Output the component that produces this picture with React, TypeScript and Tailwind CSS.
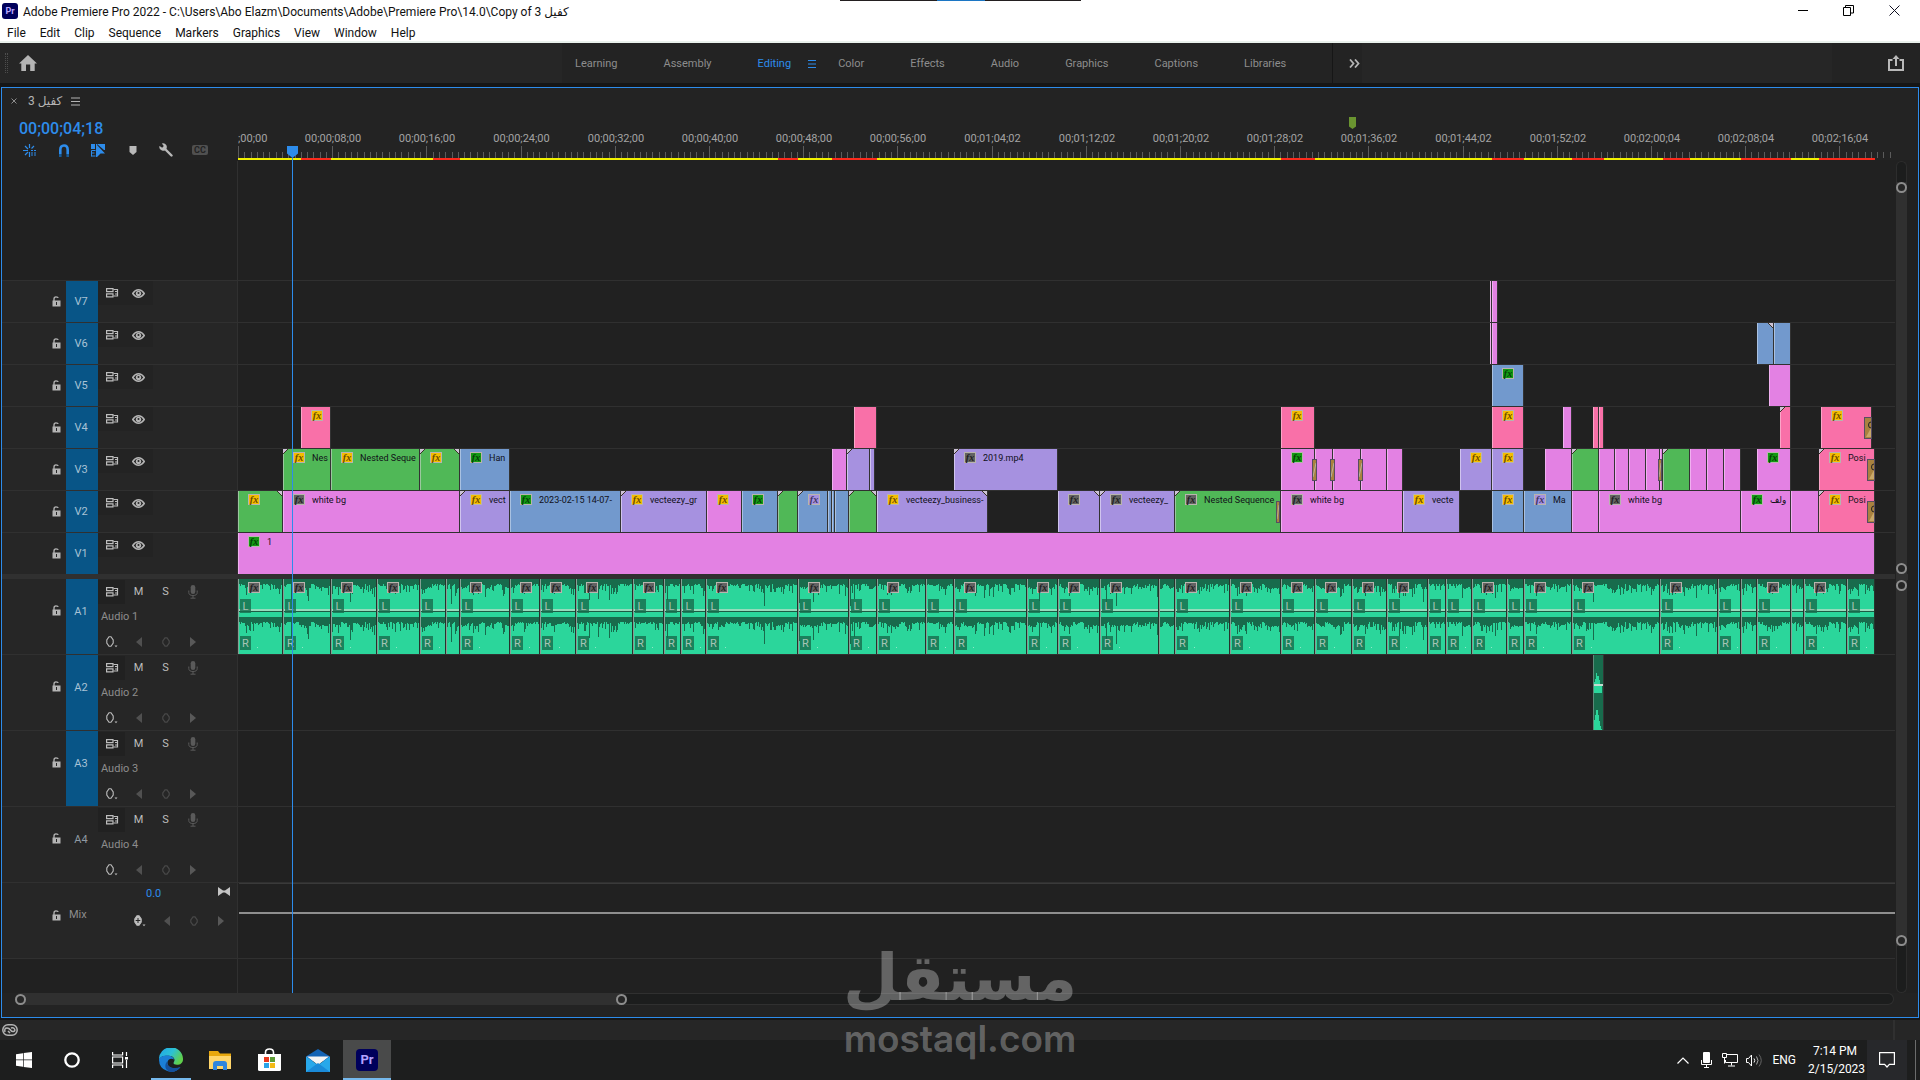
import type { ReactNode } from "react";

type Tone = "pink" | "lavender" | "blue" | "green" | "salmon";
type Fx = "yellow" | "green" | "gray" | "purple";

type Clip = {
  start: number;
  end: number;
  tone: Tone;
  fx?: Fx;
  label?: string;
  fadeIn?: boolean;
  fadeOut?: boolean;
  transition?: "cut" | "end" | "wide";
};

const toneStyles: Record<Tone, string> = {
  pink: "bg-[#e381e3] border-l-[#f0b0f0]",
  lavender: "bg-[#a691e0] border-l-[#d0c4ee]",
  blue: "bg-[#7299cd] border-l-[#a9c1e1]",
  green: "bg-[#50b857] border-l-[#9bc79e]",
  salmon: "bg-[#f970a8] border-l-[#fba5c8]",
};

const fxStyles: Record<Fx, string> = {
  yellow: "bg-[#f5bd00] text-[#6b4a00]",
  green: "bg-[#139a13] text-[#053f05]",
  gray: "bg-[#636363] text-[#1f1f1f]",
  purple: "bg-[#a691e0] text-[#3d3560]",
};

// clip positions are pixels from the start of the sequence
const videoTracks: { name: string; clips: Clip[] }[] = [
  {
    name: "V7",
    clips: [
      { start: 1252, end: 1254, tone: "pink" },
      { start: 1254, end: 1260, tone: "pink" },
    ],
  },
  {
    name: "V6",
    clips: [
      { start: 1252, end: 1254, tone: "pink" },
      { start: 1254, end: 1260, tone: "pink" },
      { start: 1519, end: 1536, tone: "blue", fadeOut: true },
      { start: 1536, end: 1553, tone: "blue" },
    ],
  },
  {
    name: "V5",
    clips: [
      { start: 1254, end: 1286, tone: "blue", fx: "green" },
      { start: 1531, end: 1553, tone: "pink" },
    ],
  },
  {
    name: "V4",
    clips: [
      { start: 63, end: 93, tone: "salmon", fx: "yellow" },
      { start: 616, end: 639, tone: "salmon" },
      { start: 1043, end: 1077, tone: "salmon", fx: "yellow" },
      { start: 1254, end: 1286, tone: "salmon", fx: "yellow" },
      { start: 1325, end: 1334, tone: "pink" },
      { start: 1355, end: 1361, tone: "salmon" },
      { start: 1361, end: 1366, tone: "salmon" },
      { start: 1542, end: 1553, tone: "salmon", fadeIn: true },
      { start: 1583, end: 1634, tone: "salmon", fx: "yellow", transition: "wide" },
    ],
  },
  {
    name: "V3",
    clips: [
      { start: 45, end: 93, tone: "green", fx: "yellow", label: "Nes", fadeIn: true },
      { start: 93, end: 182, tone: "green", fx: "yellow", label: "Nested Seque" },
      { start: 182, end: 222, tone: "green", fx: "yellow", fadeIn: true, fadeOut: true },
      { start: 222, end: 272, tone: "blue", fx: "green", label: "Han" },
      { start: 594, end: 609, tone: "pink" },
      { start: 609, end: 632, tone: "lavender", fadeIn: true },
      { start: 632, end: 637, tone: "lavender" },
      { start: 716, end: 820, tone: "lavender", fx: "gray", label: "2019.mp4", fadeIn: true },
      { start: 1043, end: 1077, tone: "pink", fx: "green", transition: "cut" },
      { start: 1077, end: 1095, tone: "pink", transition: "cut" },
      { start: 1095, end: 1123, tone: "pink", transition: "cut" },
      { start: 1123, end: 1149, tone: "pink" },
      { start: 1149, end: 1165, tone: "pink" },
      { start: 1222, end: 1254, tone: "lavender", fx: "yellow" },
      { start: 1254, end: 1286, tone: "lavender", fx: "yellow" },
      { start: 1307, end: 1334, tone: "pink" },
      { start: 1334, end: 1361, tone: "green", fadeIn: true },
      { start: 1361, end: 1377, tone: "pink" },
      { start: 1377, end: 1391, tone: "pink" },
      { start: 1391, end: 1408, tone: "pink" },
      { start: 1408, end: 1422, tone: "pink" },
      { start: 1422, end: 1425, tone: "pink", transition: "end" },
      { start: 1425, end: 1452, tone: "green", fadeIn: true },
      { start: 1452, end: 1469, tone: "pink" },
      { start: 1469, end: 1486, tone: "pink" },
      { start: 1486, end: 1503, tone: "pink" },
      { start: 1519, end: 1553, tone: "pink", fx: "green" },
      { start: 1581, end: 1637, tone: "salmon", fx: "yellow", label: "Posi", fadeIn: true, transition: "wide" },
    ],
  },
  {
    name: "V2",
    clips: [
      { start: 0, end: 45, tone: "green", fx: "yellow", fadeOut: true },
      { start: 45, end: 222, tone: "pink", fx: "gray", label: "white bg" },
      { start: 222, end: 272, tone: "lavender", fx: "yellow", label: "vect", fadeIn: true },
      { start: 272, end: 383, tone: "blue", fx: "green", label: "2023-02-15 14-07-" },
      { start: 383, end: 469, tone: "lavender", fx: "yellow", label: "vecteezy_gr", fadeIn: true },
      { start: 469, end: 504, tone: "pink", fx: "yellow" },
      { start: 504, end: 540, tone: "blue", fx: "green" },
      { start: 540, end: 560, tone: "green", fadeIn: true },
      { start: 560, end: 590, tone: "blue", fx: "purple", fadeIn: true },
      { start: 590, end: 594, tone: "blue" },
      { start: 594, end: 597, tone: "blue" },
      { start: 597, end: 611, tone: "blue" },
      { start: 611, end: 639, tone: "green", fadeIn: true, fadeOut: true },
      { start: 639, end: 750, tone: "lavender", fx: "yellow", label: "vecteezy_business-", fadeOut: true },
      { start: 820, end: 862, tone: "lavender", fx: "gray", fadeOut: true },
      { start: 862, end: 937, tone: "lavender", fx: "gray", label: "vecteezy_", fadeIn: true },
      { start: 937, end: 1043, tone: "green", fx: "gray", label: "Nested Sequence", fadeIn: true, transition: "end" },
      { start: 1043, end: 1165, tone: "pink", fx: "gray", label: "white bg" },
      { start: 1165, end: 1222, tone: "lavender", fx: "yellow", label: "vecte" },
      { start: 1254, end: 1286, tone: "blue", fx: "yellow" },
      { start: 1286, end: 1334, tone: "blue", fx: "purple", label: "Ma" },
      { start: 1334, end: 1361, tone: "pink" },
      { start: 1361, end: 1503, tone: "pink", fx: "gray", label: "white bg" },
      { start: 1503, end: 1553, tone: "pink", fx: "green", label: "ولف" },
      { start: 1553, end: 1581, tone: "pink" },
      { start: 1581, end: 1637, tone: "salmon", fx: "yellow", label: "Posi", fadeIn: true, transition: "wide" },
    ],
  },
  {
    name: "V1",
    clips: [{ start: 0, end: 1637, tone: "pink", fx: "green", label: "1" }],
  },
];

const audioCuts = [
  0, 45, 93, 139, 182, 208, 222, 272, 302, 338, 395, 426, 443, 468, 560, 611, 639, 688, 716, 789, 820, 862, 921,
  937, 992, 1043, 1077, 1114, 1149, 1190, 1208, 1234, 1269, 1286, 1334, 1422, 1480, 1503, 1519, 1553, 1566, 1609,
  1637,
];

const audioTracks = ["Audio 1", "Audio 2", "Audio 3", "Audio 4"];

const timecodes = [
  ";00;00", "00;00;08;00", "00;00;16;00", "00;00;24;00", "00;00;32;00", "00;00;40;00", "00;00;48;00",
  "00;00;56;00", "00;01;04;02", "00;01;12;02", "00;01;20;02", "00;01;28;02", "00;01;36;02", "00;01;44;02",
  "00;01;52;02", "00;02;00;04", "00;02;08;04", "00;02;16;04",
];

// yellow / red alternate, starting with yellow
const renderBar = [
  63, 93, 195, 222, 540, 560, 594, 639, 1043, 1077, 1254, 1286, 1334, 1366, 1425, 1452, 1503, 1553, 1581, 1637,
];

const tick = (i: number) => Math.round((i * 94.2) / 15);

function FxBadge({ kind, className = "" }: { kind: Fx; className?: string }) {
  return (
    <span
      className={`flex h-[11px] w-3 shrink-0 items-center justify-center border border-[#b9b4ae] font-[Liberation_Serif,serif] text-[10px] leading-none font-bold italic ${fxStyles[kind]} ${className}`}
    >
      fx
    </span>
  );
}

function FadeCorner({ side }: { side: "left" | "right" }) {
  return (
    <svg
      width="5"
      height="5"
      viewBox="0 0 5 5"
      className={side === "left" ? "absolute top-0 -left-px" : "absolute top-0 right-0 -scale-x-100"}
    >
      <path d="M0 0h5L0 5z" fill="#cdc3d6" />
      <path d="M5 0L0 5" stroke="#3a3226" strokeWidth="1" />
    </svg>
  );
}

const transitionStyles = {
  cut: "w-[5px] -right-[3px]",
  end: "w-1 right-0",
  wide: "w-2 -right-px",
};

function Transition({ kind }: { kind: "cut" | "end" | "wide" }) {
  return (
    <span
      className={`absolute top-[10px] z-10 h-[22px] border border-[#574d63] bg-[#a9823f] ${transitionStyles[kind]}`}
    >
      {kind === "wide" ? (
        <svg viewBox="0 0 6 20" className="block h-full w-full">
          <path d="M6 4Q3.500 4 3.500 7T6 10" fill="none" stroke="#222" strokeWidth="1" />
          <path d="M1 19L6 10v9z" fill="#c9a86a" />
        </svg>
      ) : (
        <svg viewBox="0 0 3 20" preserveAspectRatio="none" className="block h-full w-full">
          <path d="M3 3L0 17" stroke="#b9b09f" strokeWidth="1" />
        </svg>
      )}
    </span>
  );
}

function VideoClips({ clips }: { clips: Clip[] }) {
  return (
    <div className="flex h-[41px]">
      {clips.map((clip, i) => (
        <div
          key={clip.start}
          className={`relative h-full shrink-0 border-r border-l border-r-[#333] ${toneStyles[clip.tone]}`}
          style={{
            width: clip.end - clip.start,
            marginLeft: clip.start - (i > 0 ? clips[i - 1].end : 0),
          }}
        >
          {clip.fadeIn && <FadeCorner side="left" />}
          {clip.fadeOut && <FadeCorner side="right" />}
          {clip.fx && (
            <div className="flex h-[17px] items-end gap-[7px] overflow-hidden pl-[9px]">
              <FxBadge kind={clip.fx} className="mb-[3px]" />
              {clip.label && (
                <span className="text-[9px] leading-[16px] whitespace-nowrap text-[#101018]">{clip.label}</span>
              )}
            </div>
          )}
          {clip.transition && <Transition kind={clip.transition} />}
        </div>
      ))}
    </div>
  );
}

// Peak depths hang from the top of a channel; seeded by position so they stay put
function noise(n: number) {
  const v = Math.sin(n * 12.9898) * 43758.5453;
  return v - Math.floor(v);
}

function wavePath(start: number, width: number, height: number) {
  let d = "";
  for (let x = 0; x < width; x++) {
    const n = start + x;
    const drift = noise(Math.floor(n / 6)) > 0.6 ? 3 : 0;
    let depth = 5 + Math.floor(noise(n) * 3) + drift;
    if (noise(n + 0.5) > 0.8) depth += 3 + Math.floor(noise(n + 0.7) * 6);
    if (noise(n + 0.3) > 0.985) depth += 14;
    d += `M${x} ${depth}h1V${height}h-1z`;
  }
  return d;
}

function AudioClip({ start, end }: { start: number; end: number }) {
  const width = end - start;
  const inner = width - 2;
  const channels = [
    { name: "L", height: 38 },
    { name: "R", height: 37 },
  ];
  return (
    <div
      className="relative h-[75px] shrink-0 border-r border-l border-r-[#26332c] border-l-[#86a094] bg-[#186b4c]"
      style={{ width }}
    >
      {channels.map((ch) => (
        <div key={ch.name} className="relative">
          <svg width={inner} height={ch.height} shapeRendering="crispEdges" className="block">
            <path d={wavePath(start, inner, ch.height)} fill="#2bd69b" />
            {width > 20 && <path d={`M18 ${ch.height - 7}h1v1h-1z`} fill="#8fe9c8" />}
          </svg>
          {width >= 17 && (
            <span className="absolute bottom-1 left-px z-10 flex h-[14px] w-[11px] items-center justify-center bg-[#186b4c]/80 text-[11px] leading-none text-[#a9c4b6]">
              {ch.name}
            </span>
          )}
        </div>
      ))}
      {width >= 29 && <FxBadge kind="gray" className="absolute top-[3px] left-[9px]" />}
      <span className="absolute inset-x-0 top-[30px] h-[3px] border-b border-[#1c5a43] bg-[#95dcbc]" />
    </div>
  );
}

function LevelBump() {
  return (
    <div className="relative ml-[1355px] h-[75px] w-[11px] border-r border-l border-r-[#333] border-l-[#5c8a78] bg-[#186b4c]">
      <svg width="9" height="75" viewBox="0 0 9 75" className="block" shapeRendering="crispEdges">
        <path d="M0 38V28L2 23V18h1v3L5 21V25h1v3l2 3v7z" fill="#2bd69b" />
        <path d="M0 75V68L2 58V55h2v3l1 3v3l1 3v3l2 5z" fill="#2bd69b" />
        <path d="M0 29h9v2H0z" fill="#c4dcd0" />
      </svg>
    </div>
  );
}

/* ---- track header icons ---- */

function LockIcon() {
  return (
    <svg width="9" height="11" viewBox="0 0 9 11" fill="none">
      <path d="M2 5V3Q2 .8 4 .8T6.200 1.800" stroke="#b4b4b4" strokeWidth="1.300" />
      <path d="M.5 4.500h8v6h-8z" fill="#b4b4b4" />
      <path d="M4 6h1v3H4z" fill="#262626" />
    </svg>
  );
}

function SyncIcon() {
  return (
    <svg width="13" height="10" viewBox="0 0 13 10" fill="none" stroke="#bdbdbd">
      <path d="M.6 .6h6.400v3H.6zM.6 5.900h6.400v3H.6z" strokeWidth="1.200" />
      <path d="M7.500 1.500h4v6.500h-4" strokeWidth="1.200" />
      <path d="M9 3h2v1H9zM9 5.500h2v1H9z" fill="#bdbdbd" stroke="none" />
    </svg>
  );
}

function EyeIcon() {
  return (
    <svg width="13" height="9" viewBox="0 0 13 9" fill="none">
      <path d="M.7 4.500Q3.300.800 6.500.800T12.300 4.500Q9.700 8.200 6.500 8.200T.7 4.500z" stroke="#b4b4b4" strokeWidth="1.500" />
      <circle cx="6.500" cy="4.500" r="2.700" fill="#b4b4b4" />
      <circle cx="6.500" cy="4" r="1" fill="#262626" />
    </svg>
  );
}

function MicIcon() {
  return (
    <svg width="10" height="14" viewBox="0 0 10 14" fill="none">
      <rect x="2.700" y="0" width="4.600" height="9" rx="2.300" fill="#5a5a5a" />
      <path d="M.8 5.500V7.500Q.8 10.500 5 10.500T9.200 7.500V5.500M5 10.500V13M2.500 13.200h5" stroke="#5a5a5a" />
    </svg>
  );
}

function KeyframeIcon({ filled = false }: { filled?: boolean }) {
  return (
    <svg width="12" height="12" viewBox="0 0 12 12" fill="none">
      <path
        d="M3 .7h2L7.200 4v3L5 10.300H3L.8 7V4z"
        fill={filled ? "#bdbdbd" : "none"}
        stroke="#bdbdbd"
        strokeWidth="1.100"
      />
      {filled && <path d="M4 3v5M1.700 5.500h4.600" stroke="#262626" />}
      <path d="M8.500 9.500h3L10 11.200z" fill="#bdbdbd" />
    </svg>
  );
}

function KeyframeNav() {
  return (
    <>
      <button aria-label="Previous keyframe" className="w-[26px]">
        <svg width="6" height="10" viewBox="0 0 6 10">
          <path d="M6 0v10L0 5z" fill="#505050" />
        </svg>
      </button>
      <button aria-label="Add keyframe" className="w-[28px]">
        <svg width="8" height="10" viewBox="0 0 8 10" fill="none">
          <path d="M3 .8h2L7.200 4v2L5 9.200H3L.8 6V4z" stroke="#484848" strokeWidth="1.200" />
        </svg>
      </button>
      <button aria-label="Next keyframe">
        <svg width="6" height="10" viewBox="0 0 6 10">
          <path d="M0 0v10l6-5z" fill="#585858" />
        </svg>
      </button>
    </>
  );
}

function TrackRow({ header, height, children }: { header: ReactNode; height: string; children?: ReactNode }) {
  return (
    <div className={`flex border-b border-[#303030] ${height}`}>
      <div className="flex w-[236px] shrink-0 border-r border-[#303030] bg-[#262626]">{header}</div>
      <div className="min-w-0 flex-1 overflow-hidden">{children}</div>
    </div>
  );
}

function LockCell({ className = "" }: { className?: string }) {
  return (
    <div className={`flex w-16 items-center justify-end pr-[5px] ${className}`}>
      <button aria-label="Toggle track lock">
        <LockIcon />
      </button>
    </div>
  );
}

function VideoHeader({ name }: { name: string }) {
  return (
    <>
      <LockCell />
      <button className="w-8 bg-[#085587] pt-[2px] pr-[2px] text-[11px] text-[#a9c3d6]">{name}</button>
      <div className="flex h-6 w-[55px] items-center gap-[13px] bg-[#232323] pl-2">
        <button aria-label="Toggle sync lock">
          <SyncIcon />
        </button>
        <button aria-label="Toggle track output">
          <EyeIcon />
        </button>
      </div>
    </>
  );
}

function AudioHeader({ index, name }: { index: number; name: string }) {
  return (
    <>
      <LockCell className="pb-3" />
      {index < 3 ? (
        <button className="w-8 bg-[#085587] pr-[2px] pb-2 text-[11px] text-[#a9c3d6]">A{index + 1}</button>
      ) : (
        <button className="w-8 pr-[2px] pb-2 text-[11px] text-[#8f9aa3]">A{index + 1}</button>
      )}
      <div className="flex flex-1 flex-col pt-px">
        <div className="flex h-6 items-center">
          <button aria-label="Toggle sync lock" className="flex h-6 w-[27px] items-center bg-[#212121] pl-2">
            <SyncIcon />
          </button>
          <button className="w-[27px] text-[11px] text-[#bdbdbd]">M</button>
          <button className="w-[27px] text-[11px] text-[#bdbdbd]">S</button>
          <button aria-label="Voice-over record" className="ml-[9px]">
            <MicIcon />
          </button>
        </div>
        <span className="pl-[3px] text-[11px] leading-[26px] text-[#8d8d8d]">{name}</span>
        <div className="flex h-6 items-center pl-2">
          <button aria-label="Show keyframes" className="w-[30px]">
            <KeyframeIcon />
          </button>
          <KeyframeNav />
        </div>
      </div>
    </>
  );
}

function MixHeader() {
  return (
    <>
      <LockCell className="pb-[10px]" />
      <span className="flex w-[68px] items-center pb-[10px] pl-[3px] text-[11px] text-[#8d8d8d]">Mix</span>
      <div className="flex flex-1 flex-col">
        <div className="flex h-[22px] items-center pl-3">
          <button className="pt-px text-[11px] text-[#2d8ceb]">0.0</button>
          <button aria-label="Fit" className="mr-[7px] mb-[6px] ml-auto">
            <svg width="12" height="9" viewBox="0 0 12 9">
              <path d="M0 0l5 3.500h2L12 0v9L7 5.500H5L0 9z" fill="#c4c4c4" />
            </svg>
          </button>
        </div>
        <div className="mt-1 flex h-6 items-center">
          <button aria-label="Show keyframes" className="w-[30px]">
            <KeyframeIcon filled />
          </button>
          <KeyframeNav />
        </div>
      </div>
    </>
  );
}

function Ring() {
  return <span className="size-[11px] shrink-0 rounded-full border-2 border-[#8d8d8d] bg-[#262626]" />;
}

/* ---- window chrome ---- */

const menus = ["File", "Edit", "Clip", "Sequence", "Markers", "Graphics", "View", "Window", "Help"];
const workspaces = ["Color", "Effects", "Audio", "Graphics", "Captions", "Libraries"];

function TitleBar() {
  return (
    <header className="relative flex h-[43px] flex-col border-b-2 border-[#e9f1ec] bg-white text-xs text-[#111]">
      <div className="absolute top-0 left-[840px] flex h-px w-[241px] justify-center bg-[#231f20]">
        <span className="w-12 bg-[#1c76c4]" />
      </div>
      <div className="flex h-[23px] items-center">
        <span className="mb-[2px] ml-[2px] flex size-4 items-center justify-center rounded-[3px] bg-[#00005b] text-[9px] font-bold text-[#b9a9ff]">
          Pr
        </span>
        <h1 className="ml-[5px] text-xs">
          Adobe Premiere Pro 2022 - C:\Users\Abo Elazm\Documents\Adobe\Premiere Pro\14.0\Copy of 3 كفيل
        </h1>
        <div className="mr-5 mb-[2px] ml-auto flex items-center gap-[35px]">
          <button aria-label="Minimize">
            <svg width="10" height="11" viewBox="0 0 10 11">
              <path d="M0 5.500h10" stroke="#000" />
            </svg>
          </button>
          <button aria-label="Restore">
            <svg width="11" height="11" viewBox="0 0 11 11" fill="none" stroke="#000">
              <path d="M.5 2.500h7v8h-7zM2.500 2.500v-2h8v7.500h-3" />
            </svg>
          </button>
          <button aria-label="Close">
            <svg width="11" height="11" viewBox="0 0 11 11" stroke="#112">
              <path d="M.5.500l10 10M10.500.500l-10 10" />
            </svg>
          </button>
        </div>
      </div>
      <nav className="flex h-[18px] items-center gap-[14px] pt-[2px] pl-[7px]">
        {menus.map((m) => (
          <button key={m}>{m}</button>
        ))}
      </nav>
    </header>
  );
}

function WorkspaceBar() {
  return (
    <div className="flex h-10 shrink-0 text-[11px] text-[#8d8d8d]">
      <div className="flex w-[562px] items-center bg-[#262626]">
        <span className="ml-[5px] h-5 w-[3px] border-x border-dotted border-[#4d4d4d]" />
        <button aria-label="Home" className="ml-[11px]">
          <svg width="18" height="16" viewBox="0 0 18 16">
            <path d="M9 0l9 8.500h-2.300V16h-4.500V9.500H7V16H2.300V8.500H0z" fill="#b4b4b4" />
          </svg>
        </button>
      </div>
      <div className="flex items-center bg-[#232323] pl-[13px]">
        <nav className="flex items-center gap-[46px] pt-[2px] pr-[46px]">
          <button>Learning</button>
          <button>Assembly</button>
          <div className="-mr-6 flex items-center gap-[17px] text-[#2d8ceb]">
            <button>Editing</button>
            <button aria-label="Workspace menu">
              <svg width="8" height="8" viewBox="0 0 8 8" stroke="#2d8ceb">
                <path d="M0 .5h8M0 4h8M0 7.500h8" />
              </svg>
            </button>
          </div>
          {workspaces.map((w) => (
            <button key={w}>{w}</button>
          ))}
        </nav>
        <button aria-label="More workspaces" className="flex h-full w-[30px] items-center border-l border-[#161616] pl-4">
          <svg width="11" height="9" viewBox="0 0 11 9" fill="none" stroke="#b4b4b4" strokeWidth="1.800">
            <path d="M1 .5l3.500 4L1 8.500M6 .5l3.500 4L6 8.500" />
          </svg>
        </button>
      </div>
      <div className="flex-1 bg-[#262626]" />
      <div className="flex w-[88px] items-center justify-end bg-[#232323] pr-4">
        <button aria-label="Quick export">
          <svg width="16" height="16" viewBox="0 0 16 16" fill="none" stroke="#b9b9b9" strokeWidth="2">
            <path d="M4.500 5H1v10h14V5h-3.500" />
            <path d="M8 11V2" />
            <path d="M4.500 4L8 0l3.500 4z" fill="#b9b9b9" stroke="none" />
          </svg>
        </button>
      </div>
    </div>
  );
}

function TimelineTools() {
  return (
    <div className="flex h-5 items-center">
      <button aria-label="Insert as nest" className="ml-[21px] w-[34px]">
        <svg width="14" height="13" viewBox="0 0 14 13" fill="none" stroke="#2d8ceb" strokeWidth="1.200">
          <path d="M0 6.500h5M8 6.500h2M11 6.500h2M6.500 0v4M6.500 8v5M2 2l3 3M11 2L8.500 4.500M2 11l3-3M8 9h2M11 9h2M8 11h2M11 11h2" />
        </svg>
      </button>
      <button aria-label="Snap" className="ml-px w-8">
        <svg width="12" height="13" viewBox="0 0 12 13" fill="none" strokeWidth="2.600">
          <path d="M2.300 10V6Q2.300 1.500 6 1.500T9.700 6v4" stroke="#2d8ceb" />
          <path d="M2.300 10v3M9.700 10v3" stroke="#175a97" />
        </svg>
      </button>
      <button aria-label="Linked selection" className="ml-px w-9">
        <svg width="14" height="13" viewBox="0 0 14 13">
          <path d="M0 0h4v5H0zM5 0h9v6h-1L6 0v13H5z" fill="#2d8ceb" />
          <path d="M.5 6.500h4M.5 9h3M.5 12h4M.5 6.500v6" fill="none" stroke="#2d8ceb" />
          <path d="M6 1l8 8.500h-4.500L6 13z" fill="#2d8ceb" />
        </svg>
      </button>
      <button aria-label="Add marker" className="ml-[2px] w-7">
        <svg width="8" height="9" viewBox="0 0 8 9">
          <path d="M.5 0h7v6L4 9 .5 6z" fill="#b9b9b9" />
        </svg>
      </button>
      <button aria-label="Timeline display settings" className="ml-[2px] w-[33px]">
        <svg width="14" height="14" viewBox="0 0 14 14" fill="none">
          <path d="M6.500 6.500l6 6" stroke="#b9b9b9" strokeWidth="2.400" strokeLinecap="round" />
          <path d="M2.800.500q3-.8 4.400 1.500T7 6.500 2.500 7.200.5 3l2.700 1.700L4.800 3z" fill="#b9b9b9" />
        </svg>
      </button>
      <button
        aria-label="Captions track options"
        className="flex h-[10px] w-4 items-center justify-center rounded-[2px] bg-[#505050] text-[9px] leading-none font-bold text-[#232323]"
      >
        CC
      </button>
    </div>
  );
}

function Ruler() {
  return (
    <div className="flex min-w-0 flex-1 flex-col justify-end overflow-hidden">
      <div className="flex h-[14px] items-center text-[11px] text-[#a3a3a3]">
        {timecodes.map((tc, i) => (
          <span
            key={tc}
            className={i === 0 ? "shrink-0 text-left" : "shrink-0 text-center"}
            style={{ width: i === 0 ? 48 : tick(i * 15) - tick(i * 15 - 15) }}
          >
            {tc}
          </span>
        ))}
      </div>
      <svg width="1656" height="12" className="block" shapeRendering="crispEdges">
        {Array.from({ length: 264 }, (_, i) => (
          <rect key={i} x={tick(i)} y={i % 15 === 0 ? 0 : 6} width="1" height="12" fill="#5b5b5b" />
        ))}
      </svg>
      <div className="flex h-[2px]">
        {renderBar.map((end, i) => (
          <span
            key={end}
            className={i % 2 === 0 ? "bg-[#f0f000]" : "bg-[#fb2a1c]"}
            style={{ width: end - (i > 0 ? renderBar[i - 1] : 0) }}
          />
        ))}
      </div>
    </div>
  );
}

function Timeline() {
  return (
    <main className="relative mx-px flex flex-1 flex-col border border-[#2d8ceb] bg-[#212121]">
      <div className="flex h-[26px] items-center bg-[#232323] text-[#b4b4b4]">
        <button aria-label="Close sequence" className="ml-[9px]">
          <svg width="6" height="6" viewBox="0 0 6 6" stroke="#8d8d8d">
            <path d="M.5.500l5 5M5.500.500l-5 5" />
          </svg>
        </button>
        <h2 className="ml-[11px] text-xs">3 كفيل</h2>
        <button aria-label="Panel menu" className="ml-[9px]">
          <svg width="9" height="9" viewBox="0 0 9 9" stroke="#b4b4b4">
            <path d="M0 1h9M0 4.500h9M0 8h9" />
          </svg>
        </button>
      </div>
      <div className="flex h-[46px] bg-[#232323]">
        <div className="w-[236px] shrink-0">
          <div className="h-[26px] pl-[17px] text-[16px] leading-[30px] font-medium text-[#2d8ceb]">00;00;04;18</div>
          <TimelineTools />
        </div>
        <Ruler />
        <div className="w-[23px]" />
      </div>

      <div className="flex flex-1 border-t border-[#212121]">
        <div className="flex min-w-0 flex-1 flex-col">
          <div className="flex flex-1">
            <div className="w-[236px] border-r border-[#303030]" />
          </div>
          <div className="border-t border-[#303030]">
            {videoTracks.map((track) => (
              <TrackRow key={track.name} height="h-[42px]" header={<VideoHeader name={track.name} />}>
                <VideoClips clips={track.clips} />
              </TrackRow>
            ))}
          </div>
          <div className="h-1 bg-[#303030]" />
          {audioTracks.map((name, i) => (
            <TrackRow key={name} height="h-[76px]" header={<AudioHeader index={i} name={name} />}>
              {i === 0 && (
                <div className="flex">
                  {audioCuts.slice(1).map((end, j) => (
                    <AudioClip key={end} start={audioCuts[j]} end={end} />
                  ))}
                </div>
              )}
              {i === 1 && <LevelBump />}
            </TrackRow>
          ))}
          <TrackRow height="h-[76px]" header={<MixHeader />}>
            <div className="ml-px h-[31px] border-t border-b-2 border-t-[#3a3a3a] border-b-[#8f8f8f]" />
          </TrackRow>
          <div className="flex h-[34px]">
            <div className="w-[236px] border-r border-[#303030]" />
          </div>
        </div>

        {/* vertical zoom bars */}
        <div className="flex w-[23px] flex-col pl-px">
          <div className="flex w-[11px] flex-1 flex-col rounded-t-full border-x border-t border-[#2d2d2d] bg-[#1c1d1d] pt-[20px]">
            <div className="-mx-px flex flex-1 flex-col justify-between bg-[#303030]">
              <Ring />
              <Ring />
            </div>
          </div>
          <div className="h-[6px] w-3 bg-[#303030]" />
          <div className="flex h-[413px] w-[11px] flex-col rounded-b-full border-x border-b border-[#2d2d2d] bg-[#1c1d1d] pb-[46px]">
            <div className="-mx-px flex flex-1 flex-col justify-between bg-[#303030]">
              <Ring />
              <Ring />
            </div>
          </div>
        </div>
      </div>

      {/* horizontal zoom bar */}
      <div className="flex h-6 bg-[#232323] pr-6 pl-[13px]">
        <div className="flex h-3 flex-1 rounded-full border-y border-r border-[#303030] bg-[#1c1d1d]">
          <div className="-my-px flex w-[612px] items-center justify-between rounded-full bg-[#303030]">
            <Ring />
            <Ring />
          </div>
        </div>
      </div>

      {/* playhead and sequence marker */}
      <div className="pointer-events-none absolute top-[58px] bottom-6 left-[285px] z-20 flex w-[11px] flex-col items-center">
        <svg width="11" height="12" viewBox="0 0 11 12" className="shrink-0">
          <path d="M0 0h11v7.500L5.500 12 0 7.500z" fill="#2d8ceb" />
        </svg>
        <span className="w-px flex-1 bg-[#2d8ceb]" />
      </div>
      <svg width="7" height="12" viewBox="0 0 7 12" className="absolute top-[29px] left-[1347px]">
        <path d="M0 0h7v9.500L3.500 12 0 9.500z" fill="#6a9430" />
      </svg>
    </main>
  );
}

/* ---- taskbar ---- */

function TaskButton({ label, open, active, children }: { label: string; open?: boolean; active?: boolean; children: ReactNode }) {
  return (
    <button
      aria-label={label}
      className={`flex h-10 w-12 flex-col items-center ${active ? "bg-[#494a4a]" : ""}`}
    >
      <span className="flex flex-1 items-center">{children}</span>
      {open && <span className={`-mt-[2px] h-[2px] bg-[#76b9ed] ${active ? "w-12" : "w-10"}`} />}
    </button>
  );
}

function Taskbar() {
  return (
    <footer className="flex h-10 shrink-0 items-center bg-[#1d1e1e] text-xs text-white">
      <TaskButton label="Start">
        <svg width="16" height="16" viewBox="0 0 16 16" fill="#fff">
          <path d="M0 2.200L7 1.200V7.600H0zM7.700 1.100L16 0v7.600H7.700zM0 8.300h7v6.500l-7-1zM7.700 8.300H16V16l-8.300-1.100z" />
        </svg>
      </TaskButton>
      <TaskButton label="Cortana">
        <svg width="16" height="16" viewBox="0 0 16 16" fill="none">
          <circle cx="8" cy="8" r="6.700" stroke="#fff" strokeWidth="2.300" />
        </svg>
      </TaskButton>
      <TaskButton label="Task View">
        <svg width="17" height="16" viewBox="0 0 17 16" fill="none" stroke="#fff" strokeWidth="1.200">
          <path d="M.6 0v3h10V0M.6 5h10v6H.6zM.6 16v-3h10v3M14.500 0v4M14.500 8v8" />
          <path d="M13 5h3v2.500h-3z" fill="#fff" stroke="none" />
        </svg>
      </TaskButton>
      <div className="ml-[3px] flex gap-px">
        <TaskButton label="Microsoft Edge" open>
          <svg width="24" height="24" viewBox="0 0 24 24">
            <defs>
              <linearGradient id="edge-top" x1="0" y1="0" x2="1" y2=".5">
                <stop offset="0" stopColor="#1fa5e8" />
                <stop offset=".55" stopColor="#2cc1d5" />
                <stop offset="1" stopColor="#5fd04c" />
              </linearGradient>
            </defs>
            <path d="M0 12a12 12 0 0 1 24-1.500c.3 4-2.500 6.300-6 6.300-3 0-4-1.300-3.200-2.500C17 11 14 8 10 7.800 4.500 7.500.8 9 0 12z" fill="url(#edge-top)" />
            <path d="M0 12C0 6.500 14 5.500 15 11.500c-3-2-7 0-6.500 4 .5 4.500 7.500 6.500 13 3.500A12 12 0 0 1 0 12z" fill="#1b7fd6" />
            <path d="M8.500 13c-2 5 5 9 13 6A12 12 0 0 1 12 24C5.500 23 5 16.500 8.500 13z" fill="#14509c" />
          </svg>
        </TaskButton>
        <TaskButton label="File Explorer">
          <svg width="22" height="19" viewBox="0 0 22 19">
            <path d="M0 0h9l2 2.500h11V18H0z" fill="#e8a80e" />
            <path d="M0 5h22v13H0z" fill="#ffd66b" />
            <path d="M4 19v-6q0-3 3-3h8q3 0 3 3v6h-4v-4H8v4z" fill="#2f86de" />
          </svg>
        </TaskButton>
        <TaskButton label="Microsoft Store">
          <svg width="23" height="24" viewBox="0 0 23 24">
            <path d="M7.500 7V4.500Q7.500 1 11.500 1t4 3.500V7" fill="none" stroke="#fff" strokeWidth="1.600" />
            <path d="M0 6h23v15.500q0 1.500-1.500 1.500h-20Q0 23 0 21.500z" fill="#fff" />
            <path d="M6 9h5v5H6z" fill="#e8391e" />
            <path d="M12 9h5v5h-5z" fill="#5d9c36" />
            <path d="M6 15h5v5H6z" fill="#2aa3e8" />
            <path d="M12 15h5v5h-5z" fill="#f3ba16" />
          </svg>
        </TaskButton>
        <TaskButton label="Mail">
          <svg width="24" height="23" viewBox="0 0 24 23">
            <path d="M0 7.500L12 0l12 7.500V12H0z" fill="#1463b4" />
            <path d="M1 7.500h22L12 16z" fill="#f4f4f4" />
            <path d="M0 7.500L12 16l12-8.500V23H0z" fill="#28a8ea" />
            <path d="M0 23l12-9 12 9z" fill="#1a8ad8" />
          </svg>
        </TaskButton>
        <TaskButton label="Adobe Premiere Pro" open active>
          <span className="flex size-[22px] items-center justify-center rounded-[4px] bg-[#00005b] text-[13px] font-bold text-[#b3a3ff]">
            Pr
          </span>
        </TaskButton>
      </div>

      <div className="ml-auto flex items-center">
        <button aria-label="Show hidden icons">
          <svg width="12" height="7" viewBox="0 0 12 7" fill="none" stroke="#fff" strokeWidth="1.200">
            <path d="M.5 6.500L6 1l5.500 5.500" />
          </svg>
        </button>
        <svg width="11" height="16" viewBox="0 0 11 16" className="ml-3" fill="none" stroke="#fff">
          <rect x="2" y="0" width="7" height="11" rx="1" fill="#fff" stroke="none" />
          <path d="M.5 8v4.500h10V8M5.500 12.500V15M3 15.500h5" />
        </svg>
        <svg width="16" height="14" viewBox="0 0 16 14" className="ml-[10px]" fill="none" stroke="#fff">
          <path d="M5 1.500h10.500v8H3.500V7M9.500 9.500v3M6 13h7M.5.500h4v4h-4zM2.500 4.500v6" />
        </svg>
        <svg width="16" height="13" viewBox="0 0 16 13" className="ml-2" fill="none" stroke="#fff">
          <path d="M.5 4.500h2l3-3.500v11l-3-3.500h-2z" />
          <path d="M8 4.500q1.500 2 0 4" />
          <path d="M10.500 2.500q3 4 0 8" stroke="#aaa" />
          <path d="M13 .5q4.500 6 0 12" stroke="#666" />
        </svg>
        <span className="ml-[10px]">ENG</span>
        <div className="ml-3 w-[54px] text-center leading-[18px] whitespace-nowrap">
          <div>7:14 PM</div>
          <div>2/15/2023</div>
        </div>
        <button aria-label="Notifications" className="ml-[5px] flex h-10 w-10 items-center justify-center bg-[#27282b]">
          <svg width="16" height="16" viewBox="0 0 16 16" fill="none" stroke="#fff" strokeWidth="1.200">
            <path d="M.6.600h14.800v11.800h-5L8 15l-2.400-2.600h-5z" />
          </svg>
        </button>
        <span className="mr-1 ml-2 h-10 w-px bg-[#6b6c6c]" />
      </div>
    </footer>
  );
}

export default function App() {
  return (
    <div className="relative flex min-h-screen flex-col overflow-hidden bg-[#161616] font-['Roboto','DejaVu_Sans',sans-serif]">
      <TitleBar />
      <WorkspaceBar />
      <div className="h-1" />
      <Timeline />
      <div className="mt-[2px] flex h-5 items-center justify-between bg-[#262626] pl-[2px]">
        <svg width="16" height="12" viewBox="0 0 16 12" fill="none" stroke="#b4b4b4" strokeWidth="1.500">
          <rect x=".8" y=".8" width="14.400" height="10.400" rx="5.200" />
          <path d="M3 8q-1-4 2-4 2 0 3.500 2t3 1.500q2-.5 1-2.500T9 4M6 7l2 2" />
        </svg>
        <span className="mr-[25px] h-full w-[2px] bg-[#303030]" />
      </div>
      <Taskbar />

      {/* watermark */}
      <div className="pointer-events-none absolute bottom-[19px] left-[845px] flex w-[230px] flex-col items-center font-semibold text-white/30">
        <span className="font-['DejaVu_Sans',sans-serif] text-[64px] leading-[75px] font-bold">مستقل</span>
        <span className="font-['Inter',sans-serif] text-[37px] leading-[45px]">mostaql.com</span>
      </div>
    </div>
  );
}
